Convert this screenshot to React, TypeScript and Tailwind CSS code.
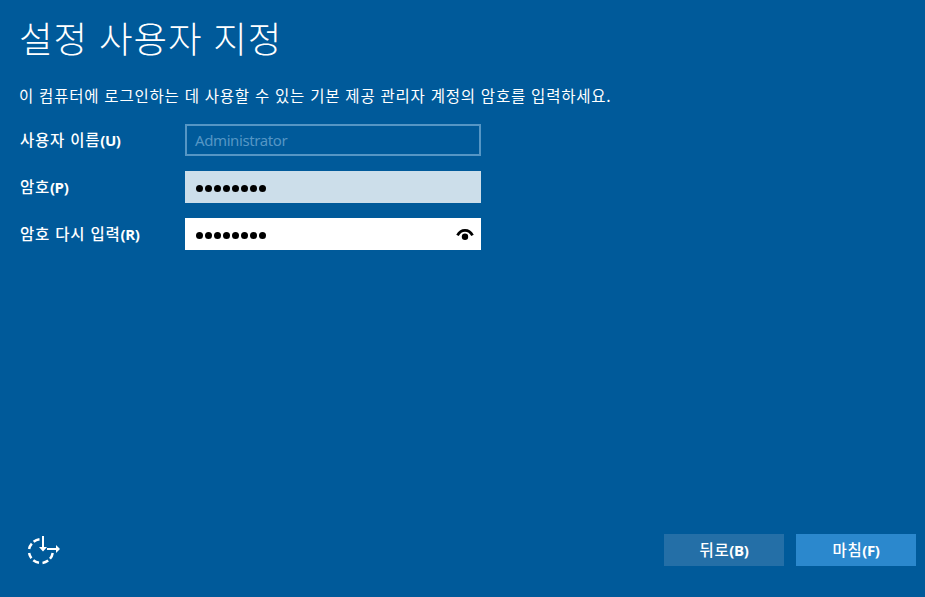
import React from "react";

const KR = "font-['Noto_Sans_CJK_KR',sans-serif]";
const LATIN = "font-['Open_Sans','Noto_Sans_CJK_KR',sans-serif]";

function Hotkey({ letter }: { letter: string }) {
  return (
    <span className="font-['Open_Sans',sans-serif] text-[15px] font-bold tracking-[-0.4px]">({letter})</span>
  );
}

function Label({ text, hotkey, id }: { text: string; hotkey: string; id: string }) {
  return (
    <label htmlFor={id} className={`${KR} w-[165px] shrink-0 text-[15.5px] leading-[31px] font-medium whitespace-nowrap text-white tracking-[0.7px] [word-spacing:1.2px]`}>
      {text}
      <Hotkey letter={hotkey} />
    </label>
  );
}

function Dots() {
  return (
    <span className="flex gap-px pt-[3px]">
      {Array.from({ length: 8 }, (_, i) => (
        <span key={i} className="mx-[0.5px] size-[7px] rounded-full bg-black" />
      ))}
    </span>
  );
}

function EyeIcon() {
  return (
    <svg width="18" height="14" viewBox="0 0 18 14" fill="none" aria-hidden="true">
      <path d="M1.500 8.300C3.200 5 6 3.300 9 3.300s5.800 1.700 7.500 5" stroke="#000" strokeWidth="2.800" />
      <circle cx="9" cy="9.700" r="3.200" fill="#000" />
    </svg>
  );
}

function EaseOfAccessIcon() {
  return (
    <svg width="40" height="36" viewBox="0 0 40 36" fill="none" stroke="#fff" aria-hidden="true">
      <path
        d="M15.500 7.300A12 12 0 0 0 9.600 9.800M7.800 11.600A12 12 0 0 0 5.100 17M5.100 21A12 12 0 0 0 7.400 26.200M9.300 28.200A12 12 0 0 0 15 30.800M18.500 30.900A12 12 0 0 0 24.200 28.600M26 26.800A12 12 0 0 0 28.700 21"
        strokeWidth="2.500"
      />
      <path d="M19 4v12M23 17h10" strokeWidth="2" />
      <path d="M15 15h8l-4 4.500zM32 13l4 4-4 4z" fill="#fff" stroke="none" />
    </svg>
  );
}

function ActionButton({ text, hotkey, primary }: { text: string; hotkey: string; primary?: boolean }) {
  return (
    <button className={`${KR} h-8 w-[120px] text-[15.5px] leading-[31px] font-medium tracking-[0.6px] text-white ${primary ? "bg-[#2b88cd]" : "bg-[#246fa7]"}`}>
      {text}
      <Hotkey letter={hotkey} />
    </button>
  );
}

export default function App() {
  return (
    <main className={`${LATIN} flex h-[597px] w-[925px] flex-col overflow-hidden bg-[#005a9a] text-white`}>
      <h1 className={`${KR} mt-[11px] ml-[19px] h-[57px] text-[36.5px] leading-[54px] font-light whitespace-nowrap tracking-[0.900px] [word-spacing:2px]`}>설정 사용자 지정</h1>
      <p className={`${KR} mt-[17px] ml-[19px] h-[21px] text-[15.5px] leading-5 whitespace-nowrap tracking-[0.800px] [word-spacing:0.750px]`}>
        이 컴퓨터에 로그인하는 데 사용할 수 있는 기본 제공 관리자 계정의 암호를 입력하세요.
      </p>
      <form className="mt-[18px] ml-5 flex flex-col gap-[15px]">
        <div className="flex">
          <Label id="user" text="사용자 이름" hotkey="U" />
          <div id="user" className="flex h-8 w-[296px] items-center border-2 border-[#5596c5] px-2 text-[15px] text-[#5596c5] font-['Noto_Sans',sans-serif] tracking-[-0.400px]">
            Administrator
          </div>
        </div>
        <div className="flex">
          <Label id="password" text="암호" hotkey="P" />
          <div id="password" className="flex h-8 w-[296px] items-center bg-[#ccdeea] px-2.5">
            <Dots />
          </div>
        </div>
        <div className="flex">
          <Label id="confirm" text="암호 다시 입력" hotkey="R" />
          <div id="confirm" className="flex h-8 w-[296px] items-center justify-between bg-white pr-[7px] pl-2.5">
            <Dots />
            <EyeIcon />
          </div>
        </div>
      </form>
      <footer className="mt-auto mb-[29px] flex h-9 items-center justify-between pr-[9px] pl-6">
        <EaseOfAccessIcon />
        <div className="flex gap-3">
          <ActionButton text="뒤로" hotkey="B" />
          <ActionButton text="마침" hotkey="F" primary />
        </div>
      </footer>
    </main>
  );
}
